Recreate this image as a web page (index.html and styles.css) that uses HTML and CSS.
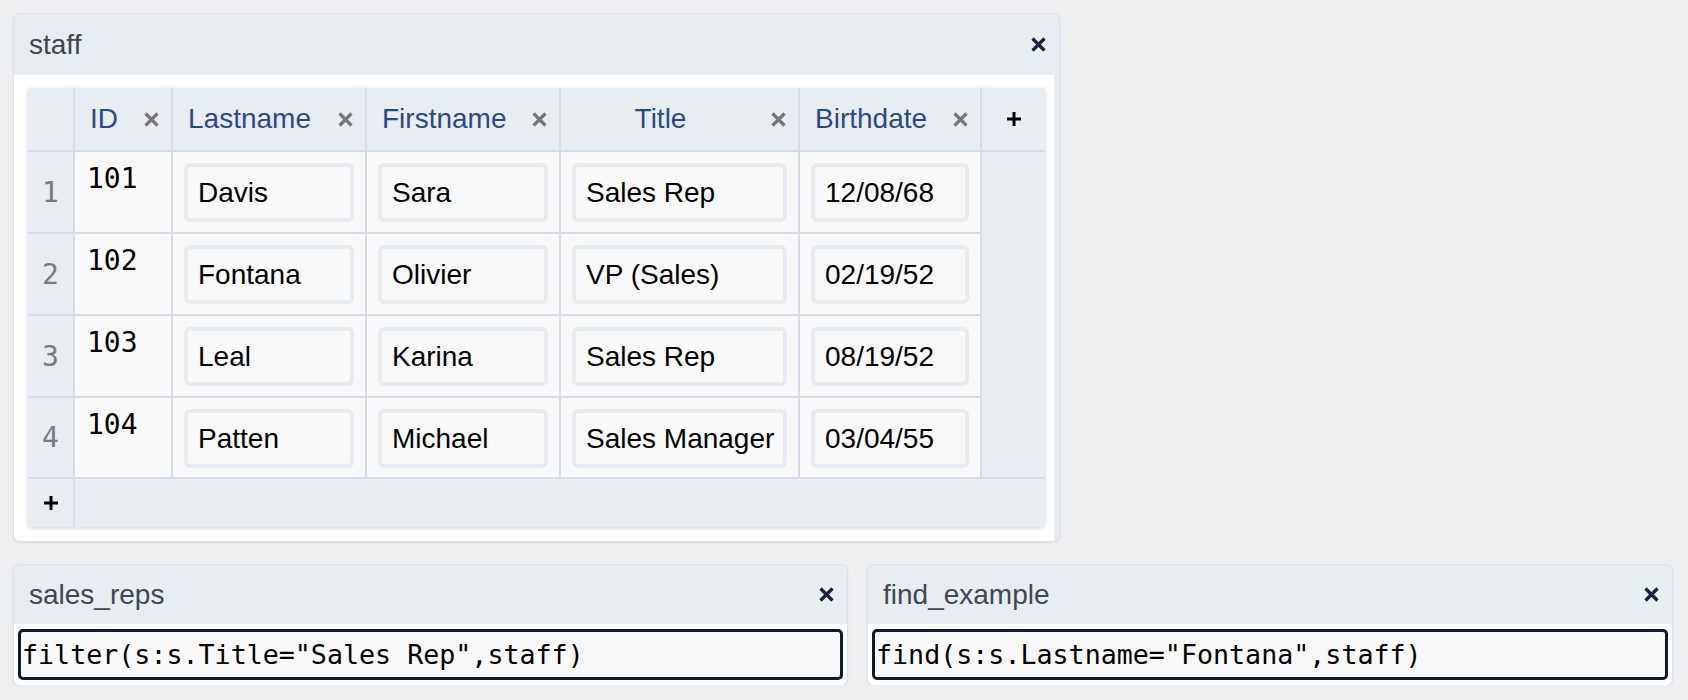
FILE: index.html
```html
<!DOCTYPE html>
<html lang="en">
<head>
<meta charset="utf-8">
<title>staff</title>
<link rel="stylesheet" href="styles.css">
</head>
<body>
<div class="desk">
  <section class="panel staff">
    <header class="panel-head">
      <span class="panel-title">staff</span>
      <span class="close"><svg viewBox="0 0 15 15" width="15" height="15"><path d="M1.5 1.5L13.5 13.5M13.5 1.5L1.5 13.5" /></svg></span>
    </header>
    <div class="panel-body table-wrap">
      <div class="grid">
        <div class="th corner"></div>
        <div class="th"><span class="lbl">ID</span><span class="x"><svg viewBox="0 0 15 15" width="15" height="15"><path d="M1.5 1.5L13.5 13.5M13.5 1.5L1.5 13.5" /></svg></span></div>
        <div class="th"><span class="lbl">Lastname</span><span class="x"><svg viewBox="0 0 15 15" width="15" height="15"><path d="M1.5 1.5L13.5 13.5M13.5 1.5L1.5 13.5" /></svg></span></div>
        <div class="th"><span class="lbl">Firstname</span><span class="x"><svg viewBox="0 0 15 15" width="15" height="15"><path d="M1.5 1.5L13.5 13.5M13.5 1.5L1.5 13.5" /></svg></span></div>
        <div class="th center"><span class="lbl">Title</span><span class="x"><svg viewBox="0 0 15 15" width="15" height="15"><path d="M1.5 1.5L13.5 13.5M13.5 1.5L1.5 13.5" /></svg></span></div>
        <div class="th"><span class="lbl">Birthdate</span><span class="x"><svg viewBox="0 0 15 15" width="15" height="15"><path d="M1.5 1.5L13.5 13.5M13.5 1.5L1.5 13.5" /></svg></span></div>
        <div class="th add-col"><svg viewBox="0 0 16 16" width="16" height="16"><path d="M8 1V15M1 8H15" /></svg></div>

        <div class="rn">1</div>
        <div class="td id">101</div>
        <div class="td"><div class="field">Davis</div></div>
        <div class="td"><div class="field">Sara</div></div>
        <div class="td"><div class="field">Sales Rep</div></div>
        <div class="td"><div class="field">12/08/68</div></div>
        <div class="filler"></div>

        <div class="rn">2</div>
        <div class="td id">102</div>
        <div class="td"><div class="field">Fontana</div></div>
        <div class="td"><div class="field">Olivier</div></div>
        <div class="td"><div class="field">VP (Sales)</div></div>
        <div class="td"><div class="field">02/19/52</div></div>

        <div class="rn">3</div>
        <div class="td id">103</div>
        <div class="td"><div class="field">Leal</div></div>
        <div class="td"><div class="field">Karina</div></div>
        <div class="td"><div class="field">Sales Rep</div></div>
        <div class="td"><div class="field">08/19/52</div></div>

        <div class="rn">4</div>
        <div class="td id">104</div>
        <div class="td"><div class="field">Patten</div></div>
        <div class="td"><div class="field">Michael</div></div>
        <div class="td"><div class="field">Sales Manager</div></div>
        <div class="td"><div class="field">03/04/55</div></div>

        <div class="rn add-row"><svg viewBox="0 0 16 16" width="16" height="16"><path d="M8 1V15M1 8H15" /></svg></div>
        <div class="add-rest"></div>
      </div>
    </div>
  </section>

  <div class="row2">
    <section class="panel sales">
      <header class="panel-head small">
        <span class="panel-title">sales_reps</span>
        <span class="close"><svg viewBox="0 0 15 15" width="15" height="15"><path d="M1.5 1.5L13.5 13.5M13.5 1.5L1.5 13.5" /></svg></span>
      </header>
      <div class="panel-body code-body">
        <div class="code">filter(s:s.Title="Sales Rep",staff)</div>
      </div>
    </section>
    <section class="panel find">
      <header class="panel-head small">
        <span class="panel-title">find_example</span>
        <span class="close"><svg viewBox="0 0 15 15" width="15" height="15"><path d="M1.5 1.5L13.5 13.5M13.5 1.5L1.5 13.5" /></svg></span>
      </header>
      <div class="panel-body code-body">
        <div class="code">find(s:s.Lastname="Fontana",staff)</div>
      </div>
    </section>
  </div>
</div>
</body>
</html>
```

FILE: styles.css
```css
html, body {
  margin: 0;
  padding: 0;
  background: #eceef0;
}
body {
  font-family: "Liberation Sans", Arial, sans-serif;
  color: #000;
}
.desk {
  padding: 14px 0 0 14px;
  display: flex;
  flex-direction: column;
  gap: 24px;
  align-items: flex-start;
}
.panel {
  background: #e8edf1;
  border-radius: 6px;
  box-shadow: 0 0 0 1px #dce1e7, 0 1px 3px rgba(0, 0, 0, 0.12);
  overflow: hidden;
}
.staff {
  width: 1045px;
}
.panel-head {
  height: 61px;
  display: flex;
  align-items: center;
  justify-content: space-between;
  padding: 0 13px 0 15px;
  box-sizing: border-box;
}
.panel-head.small {
  height: 59px;
}
.panel-title {
  font-size: 28px;
  color: #40474f;
}
.close {
  display: flex;
  color: #17233a;
}
.close svg path,
.x svg path {
  stroke: currentColor;
  stroke-width: 3.2;
  fill: none;
}
.panel-body {
  background: #fff;
}
.table-wrap {
  margin-right: 5px;
  padding: 13px 9px 14px 14px;
}
.grid {
  display: grid;
  grid-template-columns: 47px 98px 194px 194px 239px 182px 63px;
  grid-template-rows: 64px 82px 82px 82px 81px 48px;
  border-radius: 4px;
  overflow: hidden;
  box-shadow: 0 1px 4px rgba(40, 55, 80, 0.22);
  background: #e8edf2;
}
.th, .td, .rn, .filler, .add-rest {
  box-sizing: border-box;
  border-right: 2px solid #d5dbe7;
  border-bottom: 2px solid #d5dbe7;
}
.th {
  background: #e8edf2;
  display: flex;
  align-items: center;
  justify-content: space-between;
  padding: 0 12px 0 15px;
}
.th .lbl {
  font-size: 28px;
  color: #284a8c;
}
.th.center .lbl {
  flex: 1;
  text-align: center;
  margin-right: 11px;
}
.th.center {
  padding-left: 0;
}
.x {
  display: flex;
  color: #777;
}
.th.add-col {
  justify-content: center;
  padding: 0;
  border-right: none;
}
.add-col svg path,
.add-row svg path {
  stroke: #000;
  stroke-width: 3;
  fill: none;
}
.rn {
  background: #e8edf2;
  color: #7b7b7b;
  font-family: "DejaVu Sans Mono", monospace;
  font-size: 28px;
  display: flex;
  align-items: center;
  justify-content: center;
}
.td {
  background: #f9f9f9;
  padding: 11px;
}
.td.id {
  font-family: "DejaVu Sans Mono", monospace;
  font-size: 28px;
  padding: 10px 12px;
}
.field {
  box-sizing: border-box;
  height: 59px;
  border: 4px solid #e7ecf1;
  border-radius: 6px;
  background: #f9f9f9;
  display: flex;
  align-items: center;
  padding: 0 10px;
  font-size: 28px;
  white-space: nowrap;
}
.filler {
  grid-column: 7;
  grid-row: 2 / span 4;
  background: #e8edf2;
  border-right: none;
}
.rn.add-row {
  border-bottom: none;
}
.add-rest {
  grid-column: 2 / span 6;
  background: #e8edf2;
  border-bottom: none;
  border-right: none;
}
.row2 {
  display: flex;
  gap: 21px;
}
.sales {
  width: 833px;
}
.find {
  width: 804px;
}
.code-body {
  padding: 5px 4px 5px 4px;
}
.code {
  box-sizing: border-box;
  height: 51px;
  border: 3px solid #0f1b2b;
  border-radius: 5px;
  background: #f9f9f9;
  display: flex;
  align-items: center;
  padding: 0 1px;
  font-family: "DejaVu Sans Mono", monospace;
  font-size: 26.67px;
  white-space: nowrap;
}
```
